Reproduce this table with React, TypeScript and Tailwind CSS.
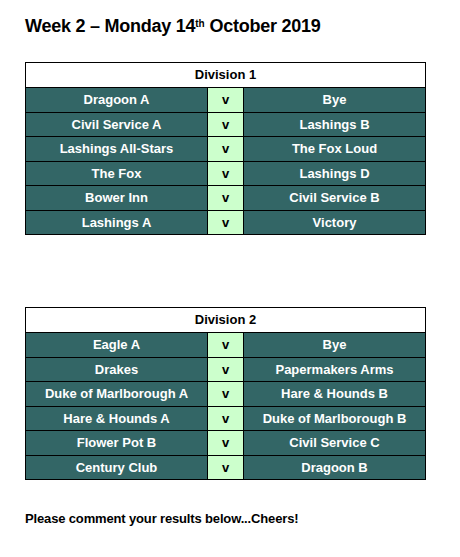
import React from 'react';

type Fixture = [string, string];

const division1: Fixture[] = [
  ['Dragoon A', 'Bye'],
  ['Civil Service A', 'Lashings B'],
  ['Lashings All-Stars', 'The Fox Loud'],
  ['The Fox', 'Lashings D'],
  ['Bower Inn', 'Civil Service B'],
  ['Lashings A', 'Victory'],
];

const division2: Fixture[] = [
  ['Eagle A', 'Bye'],
  ['Drakes', 'Papermakers Arms'],
  ['Duke of Marlborough A', 'Hare & Hounds B'],
  ['Hare & Hounds A', 'Duke of Marlborough B'],
  ['Flower Pot B', 'Civil Service C'],
  ['Century Club', 'Dragoon B'],
];

const DivisionTable = ({ title, fixtures }: { title: string; fixtures: Fixture[] }) => (
  <table className="w-[401px] border-collapse border border-black text-[13px] font-bold">
    <tbody>
      <tr className="h-[25px]">
        <td colSpan={3} className="border border-black bg-white text-center text-black">
          {title}
        </td>
      </tr>
      {fixtures.map(([home, away]) => (
        <tr key={home} className="h-[24.5px]">
          <td className="w-[182px] border border-black bg-[#336666] p-0 text-center text-white">{home}</td>
          <td className="w-[36px] border border-black bg-[#ccffcc] p-0 text-center text-black">v</td>
          <td className="border border-black bg-[#336666] p-0 text-center text-white">{away}</td>
        </tr>
      ))}
    </tbody>
  </table>
);

export default function App() {
  return (
    <div className="min-h-[557px] w-[460px] bg-white pl-[25px] font-['Liberation_Sans',Arial,sans-serif] text-black">
      <h1 className="pt-[15px] text-[18px] leading-[22px] font-bold tracking-[-0.25px]">
        Week 2 – Monday 14<sup className="text-[10px] tracking-normal">th</sup> October 2019
      </h1>
      <div className="mt-[25px]">
        <DivisionTable title="Division 1" fixtures={division1} />
      </div>
      <div className="mt-[72px]">
        <DivisionTable title="Division 2" fixtures={division2} />
      </div>
      <p className="mt-[31px] text-[13px] leading-[16px] font-bold tracking-[-0.15px]">
        Please comment your results below...Cheers!
      </p>
    </div>
  );
}
